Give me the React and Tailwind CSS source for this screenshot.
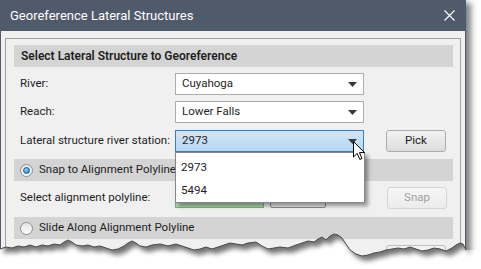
import React from "react";

// torn-paper edge along the bottom of the dialog
const tear = [
  [0, 249], [6, 247], [12, 248], [18, 246], [24, 247], [30, 245], [36, 247], [42, 245], [48, 246],
  [54, 244], [60, 245], [64, 242], [68, 240], [72, 242], [76, 245], [82, 246], [88, 245], [94, 247],
  [100, 246], [106, 248], [112, 250], [118, 249], [124, 246], [128, 243], [132, 241], [136, 243],
  [140, 246], [146, 247], [152, 245], [160, 244], [168, 246], [176, 244], [182, 246], [188, 248],
  [194, 250], [200, 249], [206, 247], [212, 249], [218, 247], [224, 245], [230, 243], [236, 244],
  [242, 245], [248, 243], [256, 242], [262, 246], [268, 249], [274, 248], [280, 247], [288, 248],
  [296, 245], [302, 243], [308, 241], [314, 242], [318, 239], [322, 237], [326, 240], [330, 236],
  [334, 234], [338, 235], [342, 238], [346, 244], [350, 250], [356, 254], [362, 256], [368, 255],
  [374, 253], [380, 252], [386, 250], [392, 249], [398, 248], [404, 249], [410, 247], [416, 249],
  [422, 251], [428, 250], [434, 248], [440, 249], [446, 251], [452, 248], [456, 245], [460, 243],
  [463, 244], [466, 250],
];
const edgeD = "M" + tear.map(function (p) { return p[0] + "," + p[1]; }).join(" L");
const belowD = edgeD + " L481,250 L481,269 L0,269 Z";
const aboveD = edgeD + " L466,0 L0,0 Z";

function Arrow() {
  return (
    <svg width="9" height="5" viewBox="0 0 9 5" className="shrink-0">
      <path d="M0,0 L9,0 L4.5,5 Z" fill="#3a3a3a" />
    </svg>
  );
}

function Combo({ value, active }) {
  return (
    <div
      className={
        "h-[22px] w-[189px] shrink-0 flex items-center justify-between pl-[6px] pr-[6px] border " +
        (active
          ? "border-[#3c7fb1] bg-gradient-to-b from-[#d0e7fa] to-[#b6d7f2]"
          : "border-[#abadb3] bg-white")
      }
    >
      <span className="text-[11.5px] text-[#1e1e1e] leading-none">{value}</span>
      <Arrow />
    </div>
  );
}

function Btn({ label, disabled }) {
  return (
    <div
      className={
        "h-[22px] w-[60px] rounded-[3px] border flex items-center justify-center text-[11.5px] bg-gradient-to-b " +
        (disabled
          ? "border-[#d5d5d5] from-[#f6f6f6] to-[#ececec] text-[#a0a0a0]"
          : "border-[#acacac] from-[#f2f2f2] to-[#dcdcdc] text-[#1e1e1e]")
      }
    >
      {label}
    </div>
  );
}

function Radio({ checked }) {
  return (
    <div className="w-[13px] h-[13px] shrink-0 rounded-full border border-[#8e8f8f] bg-gradient-to-b from-[#e6e6e6] to-[#fbfbfb] flex items-center justify-center">
      {checked && (
        <div className="w-[7px] h-[7px] rounded-full bg-[radial-gradient(circle_at_40%_35%,#8fd3ff,#1f6fc0)] border border-[#1c5f9f]" />
      )}
    </div>
  );
}

function Band({ children, bold }) {
  return (
    <div
      className={
        "ml-[8px] mr-[7px] h-[22px] bg-[#d4d4d4] flex items-center gap-[6px] pl-[6px] text-[#1e1e1e] whitespace-nowrap " +
        (bold ? "font-semibold pl-[7px] text-[12px]" : "text-[11.5px]")
      }
    >
      {children}
    </div>
  );
}

function Label({ children }) {
  return <span className="w-[155px] shrink-0 text-[11.5px] text-[#1e1e1e] whitespace-nowrap">{children}</span>;
}

export default function App() {
  return (
    <div className="relative w-[481px] h-[269px] overflow-hidden bg-white font-['Roboto',sans-serif]">
      <div className="w-[466px] h-[262px] flex flex-col border-x border-[#4f5a6a] bg-[#f0f0f0] shadow-[5px_3px_6px_rgba(0,0,0,0.5)]">
        {/* title bar */}
        <div className="h-[31px] shrink-0 bg-[#4f5a6a] flex items-center justify-between pl-[9px] pr-[10px]">
          <span className="text-white text-[13px]">Georeference Lateral Structures</span>
          <svg width="11" height="11" viewBox="0 0 11 11">
            <path d="M0.5,0.5 L10.5,10.5 M10.5,0.5 L0.5,10.5" stroke="#ffffff" strokeWidth="1.1" />
          </svg>
        </div>

        <div className="flex-1 px-[4px] pt-[7px]">
          <div className="h-full border border-[#a0a0a0] pt-[6px]">
            <Band bold>Select Lateral Structure to Georeference</Band>

            <div className="pl-[14px] flex flex-col">
              <div className="mt-[6px] flex items-center">
                <Label>River:</Label>
                <Combo value="Cuyahoga" />
              </div>
              <div className="mt-[6px] flex items-center">
                <Label>Reach:</Label>
                <Combo value="Lower Falls" />
              </div>
              <div className="mt-[7px] flex items-center">
                <Label>Lateral structure river station:</Label>
                <Combo value="2973" active />
                <div className="ml-[22px]">
                  <Btn label="Pick" />
                </div>
              </div>
            </div>

            <div className="mt-[7px]">
              <Band>
                <Radio checked />
                <span>Snap to Alignment Polyline</span>
              </Band>
            </div>

            <div className="pl-[14px] mt-[6px] flex items-center">
              <Label>Select alignment polyline:</Label>
              <div className="h-[20px] w-[89px] shrink-0 border border-[#7fb37f] bg-gradient-to-b from-[#e6f4e2] to-[#a9d8a0]" />
              <div className="ml-[6px] h-[20px] w-[56px] shrink-0 rounded-[2px] border border-[#8a8a8a] bg-[#e8e8e8]" />
              <div className="ml-[61px]">
                <Btn label="Snap" disabled />
              </div>
            </div>

            <div className="mt-[8px]">
              <Band>
                <Radio />
                <span>Slide Along Alignment Polyline</span>
              </Band>
            </div>

            <div className="mt-[6px] ml-[380px] h-[22px] w-[60px] rounded-[3px] border border-[#c0c0c0] bg-[#f2f2f2]" />
          </div>
        </div>
      </div>

      {/* open drop-down list */}
      <div className="absolute left-[175px] top-[152px] w-[190px] h-[51px] bg-white border border-[#828790] shadow-[3px_3px_4px_rgba(0,0,0,0.4)] flex flex-col pt-[3px]">
        <div className="h-[23px] flex items-center pl-[5px] text-[11.5px] text-[#1e1e1e]">2973</div>
        <div className="h-[23px] flex items-center pl-[5px] text-[11.5px] text-[#1e1e1e]">5494</div>
      </div>

      {/* mouse cursor */}
      <svg className="absolute left-[353px] top-[141px]" width="13" height="20" viewBox="0 0 13 20">
        <path d="M0.5,0.5 L0.5,16 L4.2,12.4 L6.8,18.5 L9,17.5 L6.5,11.6 L11.5,11.6 Z" fill="#ffffff" stroke="#000000" strokeWidth="1" strokeLinejoin="round" />
      </svg>

      {/* torn bottom edge */}
      <svg className="absolute left-0 top-0 pointer-events-none" width="481" height="269" viewBox="0 0 481 269">
        <defs>
          <clipPath id="below">
            <path d={belowD} />
          </clipPath>
          <filter id="blur" x="-10%" y="-10%" width="120%" height="130%">
            <feGaussianBlur stdDeviation="2.5" />
          </filter>
        </defs>
        <g clipPath="url(#below)">
          <rect x="0" y="200" width="481" height="69" fill="#ffffff" />
          <path d={aboveD} transform="translate(4,5)" fill="#000000" opacity="0.55" filter="url(#blur)" />
        </g>
        <path d={edgeD} fill="none" stroke="#4a4a4a" strokeWidth="1" />
      </svg>
    </div>
  );
}
